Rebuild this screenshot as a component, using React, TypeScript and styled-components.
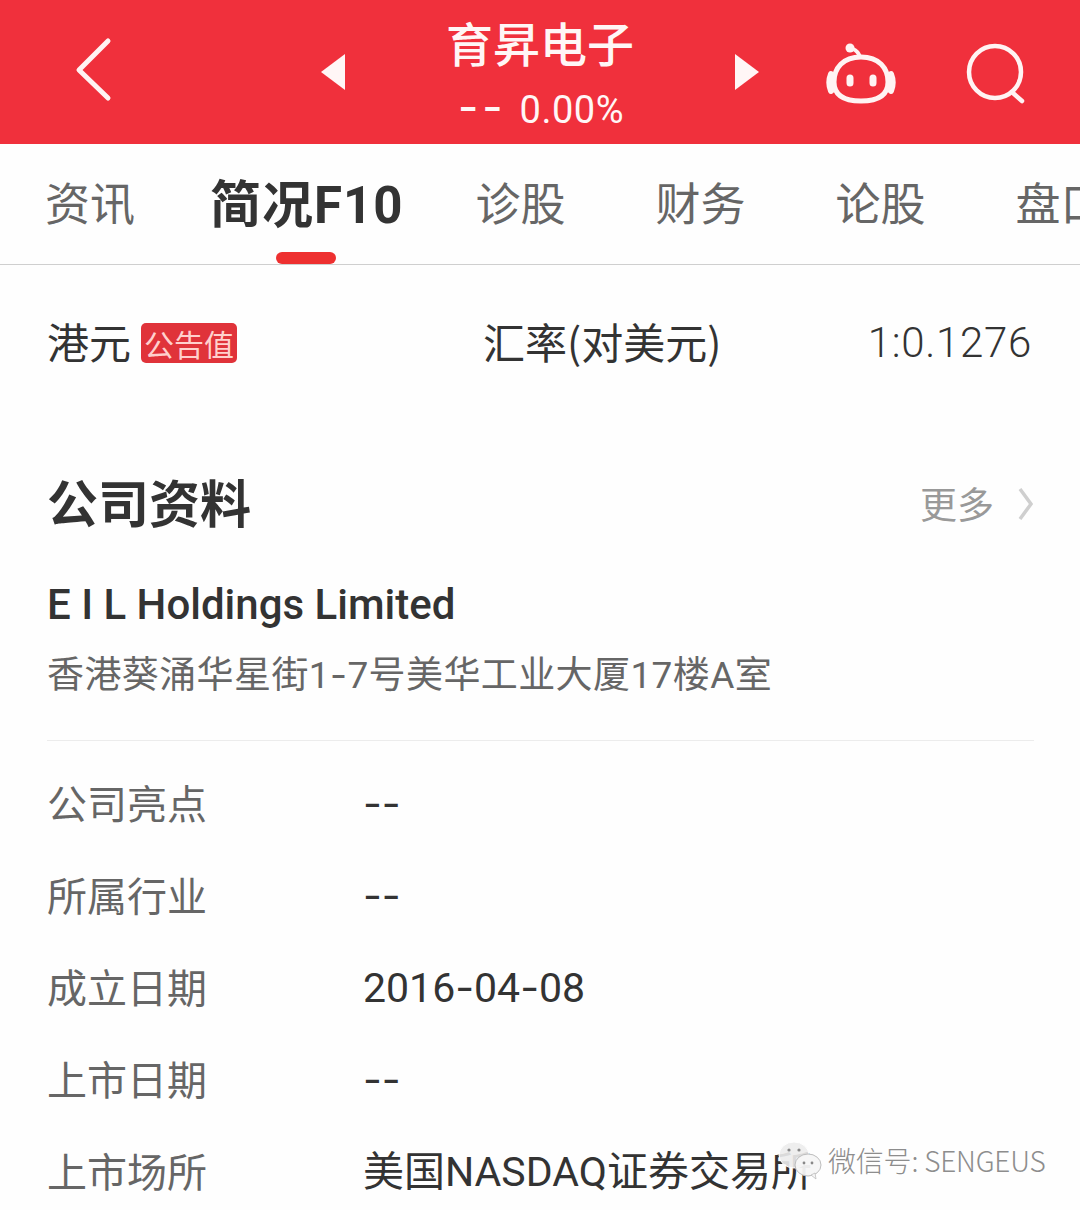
import React from "react";
import styled, { createGlobalStyle } from "styled-components";

const Global = createGlobalStyle`
  html, body { margin: 0; padding: 0; background: #fff; }
  body { width: 1080px; height: 1210px; overflow: hidden; font-family: Roboto, "Noto Sans CJK SC", sans-serif; }
`;
const Page = styled.div`
  position: relative; width: 1080px; height: 1210px; overflow: hidden; background: #fefefe;
`;
const Header = styled.header`
  height: 144px; background: #f0303c; display: flex; align-items: center; color: #fff6f6;
`;
const Back = styled.svg`
  width: 40px; height: 66px; margin-left: 75px; flex: none; margin-top: -6px;
`;
const ArrowLeft = styled.div`
  width: 0; height: 0; margin-left: 206px; flex: none;
  border-top: 18px solid transparent; border-bottom: 18px solid transparent; border-right: 24px solid #fff6f6;
`;
const ArrowRight = styled.div`
  width: 0; height: 0; flex: none;
  border-top: 18px solid transparent; border-bottom: 18px solid transparent; border-left: 24px solid #fff6f6;
`;
const Title = styled.div`
  width: 390px; flex: none; display: flex; flex-direction: column; align-items: center; margin-top: -1px;
`;
const Name = styled.div`
  font: 500 47px/54px "Noto Sans CJK SC", sans-serif; margin-top: 2px;
`;
const Quote = styled.div`
  font: 400 38px/42px Roboto, sans-serif; margin-top: 17px; white-space: pre; letter-spacing: 0.5px; padding-left: 2px;
`;
const QuoteDash = styled.span`
  font: 500 44px/42px Inter, sans-serif; letter-spacing: 4px; margin-right: 3px;
`;
const Dash = styled.span`
  font-family: Inter, sans-serif;
`;
const Bot = styled.svg`
  width: 72px; height: 66px; margin-left: 66px; flex: none; margin-top: 4px;
`;
const Search = styled.svg`
  width: 62px; height: 62px; margin-left: 68px; flex: none; margin-top: 4px;
`;
const Tabs = styled.nav`
  height: 120px; border-bottom: 1px solid #cfcfcf; display: flex; align-items: center; white-space: nowrap; overflow: hidden;
`;
const Tab = styled.div<{ $active?: boolean }>`
  position: relative; flex: none; height: 120px; display: flex; align-items: center; box-sizing: border-box;
  padding: ${p => (p.$active ? "2px 27px 0 30px" : "2px 45px 0")};
  font: ${p => (p.$active ? 700 : 400)} ${p => (p.$active ? 51 : 45)}px/1 Roboto, "Noto Sans CJK SC", sans-serif;
  letter-spacing: ${p => (p.$active ? 1 : 0)}px;
  color: ${p => (p.$active ? "#333" : "#666")};
`;
const Indicator = styled.span`
  position: absolute; left: 96px; bottom: 0; width: 60px; height: 12px; border-radius: 6px; background: #ee3030;
`;
const Content = styled.main`
  padding: 0 46px 0 47px;
`;
const RateRow = styled.div`
  height: 156px; display: flex; align-items: center; font: 400 42px/1 "Noto Sans CJK SC", sans-serif; color: #333;
`;
const Currency = styled.div`
  width: 436px; flex: none; display: flex; align-items: center; gap: 10px;
`;
const CurrencyText = styled.span`
  margin-top: -4px;
`;
const Badge = styled.span`
  width: 96px; height: 40px; border-radius: 5px; background: #e0333a; color: #ffd0cd;
  font: 400 30px/40px "Noto Sans CJK SC", sans-serif; text-align: center; white-space: nowrap;
`;
const RateLabel = styled.div`
  flex: 1; margin-top: -4px;
`;
const RateValue = styled.div`
  font: 300 42px/1 Roboto, sans-serif; margin-right: 2px; letter-spacing: 0.7px;
`;
const SectionHead = styled.div`
  display: flex; align-items: center; justify-content: space-between; margin-top: 48px; height: 64px;
`;
const SectionTitle = styled.h2`
  margin: 0; font: 700 51px/64px "Noto Sans CJK SC", sans-serif; color: #333;
`;
const More = styled.div`
  display: flex; align-items: center; gap: 24px; color: #999; font: 400 37px/1 "Noto Sans CJK SC", sans-serif; margin-top: 4px;
`;
const Chevron = styled.svg`
  width: 16px; height: 36px; flex: none; margin-top: 2px;
`;
const Company = styled.div`
  margin-top: 44px; font: 500 42px/56px Roboto, sans-serif; color: #333;
`;
const Address = styled.div`
  margin-top: 18px; font: 400 37px/48px Roboto, "Noto Sans CJK SC", sans-serif; color: #666; white-space: nowrap; letter-spacing: 0.4px;
`;
const Divider = styled.div`
  margin-top: 40px; height: 1px; background: #ececec;
`;
const Rows = styled.div`
  margin-top: 16px; display: flex; flex-direction: column;
`;
const Row = styled.div`
  height: 92px; display: flex; align-items: center;
`;
const RowLabel = styled.div`
  width: 316px; flex: none; font: 400 40px/1 "Noto Sans CJK SC", sans-serif; color: #666; margin-top: -2px;
`;
const RowValue = styled.div`
  font: 400 41px/1 Roboto, "Noto Sans CJK SC", sans-serif; color: #333; white-space: nowrap; margin-top: 2px;
`;
const Watermark = styled.div`
  position: absolute; left: 778px; top: 1140px; display: flex; align-items: center; gap: 6px;
  font: 300 28px/36px "Noto Sans CJK SC", sans-serif; color: #8d8d8d; white-space: nowrap; letter-spacing: -0.2px;
  text-shadow: 1px 1px 0 rgba(255,255,255,.9);
`;
const WeChat = styled.svg`
  width: 44px; height: 40px; flex: none;
`;

const rows: [string, string][] = [
  ["公司亮点", "--"],
  ["所属行业", "--"],
  ["成立日期", "2016-04-08"],
  ["上市日期", "--"],
  ["上市场所", "美国NASDAQ证券交易所"],
];

const withDashes = (text: string) =>
  text.split(/(-)/).map((part, i) => (part === "-" ? <Dash key={i}>-</Dash> : part));

export default function App() {
  return (
    <Page>
      <Global />
      <Header>
        <Back viewBox="0 0 40 66" fill="none" stroke="#fff3f3" strokeWidth="5" strokeLinecap="round" strokeLinejoin="round">
          <path d="M33 5 L4 34 L33 62" />
        </Back>
        <ArrowLeft />
        <Title>
          <Name>育昇电子</Name>
          <Quote><QuoteDash>--</QuoteDash>{" 0.00%"}</Quote>
        </Title>
        <ArrowRight />
        <Bot viewBox="0 0 72 66" fill="none" stroke="#fff3f3" strokeWidth="5" strokeLinecap="round">
          <circle cx="25" cy="7" r="4.5" fill="#fff3f3" stroke="none" />
          <path d="M28 8 Q33 10 35 16" strokeWidth="4" />
          <path d="M36 16 C54 16 63 27 63 41 C63 55 52 60 36 60 C20 60 9 55 9 41 C9 27 18 16 36 16 Z" />
          <path d="M6 33 C4 38 4 45 6 50 M66 33 C68 38 68 45 66 50" strokeWidth="6" />
          <path d="M25 37 V42 M48 37 V42" strokeWidth="7" />
        </Bot>
        <Search viewBox="0 0 62 62" fill="none" stroke="#fff3f3" strokeWidth="4.5" strokeLinecap="round">
          <circle cx="30" cy="29" r="26" />
          <path d="M48 50 L57 58" />
        </Search>
      </Header>
      <Tabs>
        <Tab>资讯</Tab>
        <Tab $active>
          简况F10
          <Indicator />
        </Tab>
        <Tab>诊股</Tab>
        <Tab>财务</Tab>
        <Tab>论股</Tab>
        <Tab>盘口</Tab>
      </Tabs>
      <Content>
        <RateRow>
          <Currency>
            <CurrencyText>港元</CurrencyText>
            <Badge>公告值</Badge>
          </Currency>
          <RateLabel>汇率(对美元)</RateLabel>
          <RateValue>1:0.1276</RateValue>
        </RateRow>
        <SectionHead>
          <SectionTitle>公司资料</SectionTitle>
          <More>
            更多
            <Chevron viewBox="0 0 16 36" fill="none" stroke="#cfcfcf" strokeWidth="3.5">
              <path d="M2 3 L13 18 L2 33" />
            </Chevron>
          </More>
        </SectionHead>
        <Company>E I L Holdings Limited</Company>
        <Address>{withDashes("香港葵涌华星街1-7号美华工业大厦17楼A室")}</Address>
        <Divider />
        <Rows>
          {rows.map(([k, v]) => (
            <Row key={k}>
              <RowLabel>{k}</RowLabel>
              <RowValue>{withDashes(v)}</RowValue>
            </Row>
          ))}
        </Rows>
      </Content>
      <Watermark>
        <WeChat viewBox="0 0 44 40">
          <ellipse cx="16" cy="15" rx="15" ry="13" fill="#ececec" fillOpacity="0.9" stroke="#ffffff" strokeWidth="1" />
          <circle cx="11" cy="10" r="1.6" fill="#888" />
          <circle cx="21" cy="10" r="1.6" fill="#888" />
          <ellipse cx="30" cy="25" rx="13" ry="11" fill="#f6f6f6" fillOpacity="0.95" stroke="#bdbdbd" strokeWidth="1" />
          <circle cx="26" cy="23" r="1.4" fill="#888" />
          <circle cx="34" cy="23" r="1.4" fill="#888" />
          <path d="M33 35 L38 39 L37 33 Z" fill="#f6f6f6" stroke="#bdbdbd" strokeWidth="0.8" />
        </WeChat>
        微信号: SENGEUS
      </Watermark>
    </Page>
  );
}
